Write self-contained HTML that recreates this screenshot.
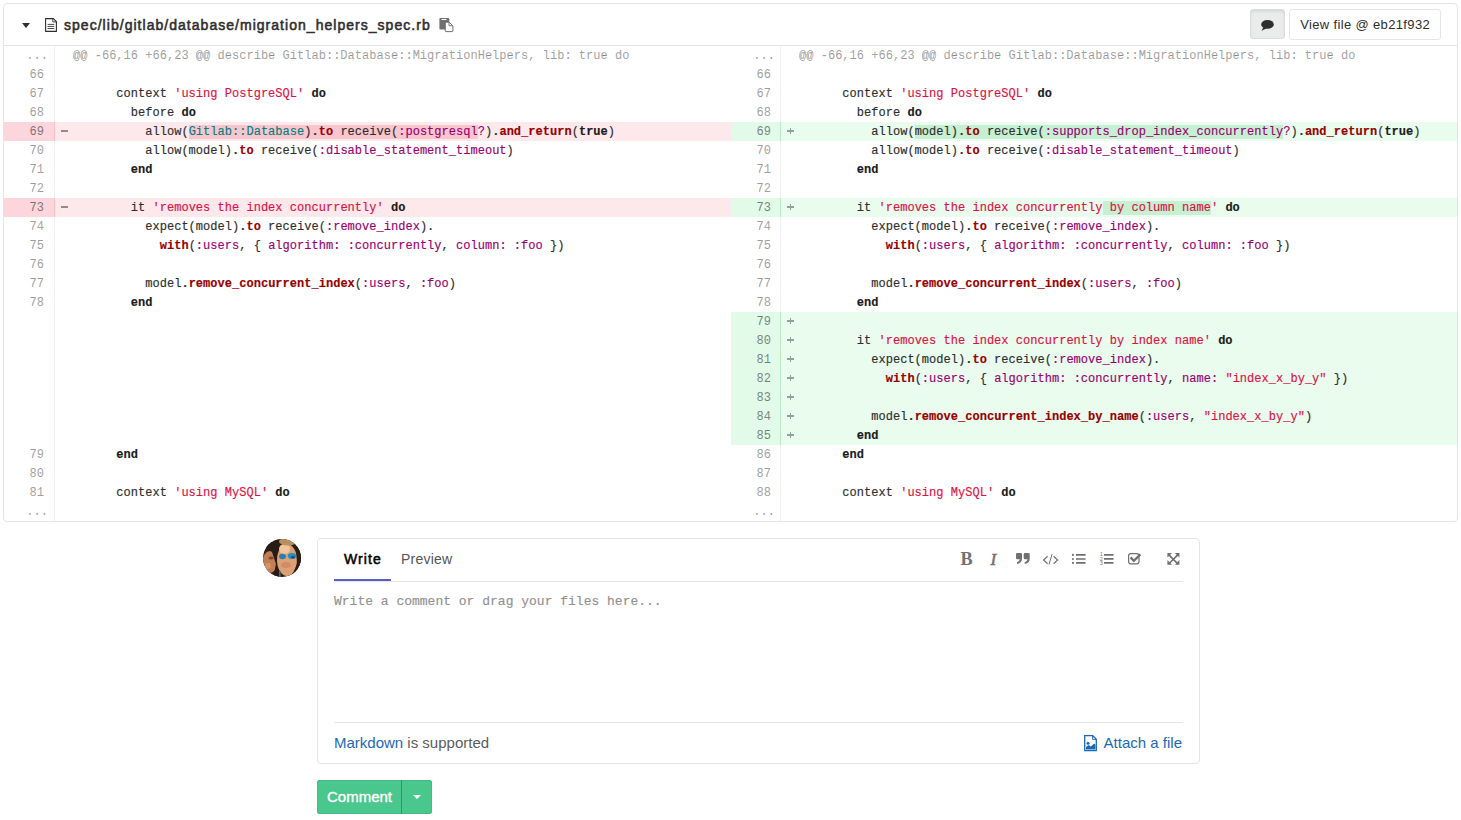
<!DOCTYPE html>
<html><head><meta charset="utf-8">
<style>
*{box-sizing:border-box;margin:0;padding:0}
html,body{width:1461px;height:820px;background:#fff;overflow:hidden;font-family:"Liberation Sans",sans-serif;color:#2e2e2e}
.file{position:absolute;left:3px;top:3px;width:1455px;height:519px;border:1px solid #e5e5e5;border-radius:4px;overflow:hidden}
.hdr{position:absolute;left:0;top:0;width:1453px;height:42px;border-bottom:1px solid #e5e5e5}
.caret{position:absolute;left:18px;top:19px;width:0;height:0;border-left:4.5px solid transparent;border-right:4.5px solid transparent;border-top:5px solid #2e2e2e}
.ficon{position:absolute;left:41px;top:14px}
.title{position:absolute;left:60px;top:13px;font-weight:normal;-webkit-text-stroke:0.55px #2e2e2e;font-size:14px;line-height:16px;color:#2e2e2e;white-space:nowrap;letter-spacing:1.03px}
.copy{position:absolute;left:435px;top:14px}
.btn-c{position:absolute;left:1246px;top:5px;width:35px;height:30px;border:1px solid #dcdcdc;border-radius:3px;background:#eaebeb;box-shadow:inset 0 2px 2px rgba(0,0,0,.08)}
.btn-v{position:absolute;left:1285px;top:5px;width:152px;height:31px;border:1px solid #e5e5e5;border-radius:3px;background:#fff;font-size:13px;line-height:29px;text-align:center;color:#2e2e2e;white-space:nowrap;letter-spacing:0.35px;text-indent:0.35px}
.diff{position:absolute;left:0;top:42px;width:1453px}
.r{position:relative;height:19px;font-family:"Liberation Mono",monospace;font-size:12px;line-height:19px;white-space:pre;letter-spacing:0.025px;-webkit-text-stroke:0.15px}
.r>div{position:absolute;top:0;height:19px;padding-top:1px}
.ln{color:rgba(0,0,0,.36);text-align:right;border-right:1px solid #f0f0f0}
.l1{left:0;width:51px;padding-right:10px}
.c1{left:51px;width:676px;padding-left:18px}
.l2{left:727px;width:50px;padding-right:9px}
.c2{left:777px;width:676px;padding-left:18px}
.match{color:rgba(0,0,0,.36)}
.old.ln{background:#fdd5dc;border-right-color:#fbbfca}
.old.lc{background:#fde8eb}
.new.ln{background:#e1fbe8;border-right-color:#b9ecc7}
.new.lc{background:#e9fcee}
.sign{position:absolute;left:6px;top:0;width:7px;height:19px}
.sm::before{content:"";position:absolute;left:0;top:8px;width:7px;height:1.6px;background:#9a868b}
.sp::before{content:"";position:absolute;left:0;top:8.3px;width:7px;height:1.4px;background:#8da596}
.sp::after{content:"";position:absolute;left:2.8px;top:5.6px;width:1.4px;height:6.8px;background:#8da596}
.old.ln,.new.ln{color:rgba(0,0,0,.45)}
.k{font-weight:bold;color:#1c1c1c}
.s{color:#d14}
.ss{color:#990073}
.nf{color:#900;font-weight:bold}
.no{color:#008080}
.o{font-weight:bold}
.hl1{background:#fac5cd}
.hl2{background:#c7f0d2}
.dots{position:relative;left:4px}

.avatar{position:absolute;left:262px;top:538px;width:40px;height:40px;border-radius:50%;background:#8a5a3c;overflow:hidden}
.form{position:absolute;left:317px;top:538px;width:883px;height:226px;border:1px solid #e5e5e5;border-radius:4px}
.tab-write{position:absolute;left:26px;top:12px;font-size:14px;line-height:16px;font-weight:normal;-webkit-text-stroke:0.5px #000;color:#000;letter-spacing:1.1px}
.tab-prev{position:absolute;left:83px;top:12px;font-size:14px;line-height:16px;color:#555;letter-spacing:0.22px}
.tab-ul{position:absolute;left:16px;top:40px;width:57px;height:2px;background:#5a5ec2}
.tab-line{position:absolute;left:16px;top:42px;width:849px;height:1px;background:#e5e5e5}
.ph{position:absolute;left:16px;top:55px;font-family:"Liberation Mono",monospace;font-size:13px;line-height:16px;color:#919191;-webkit-text-stroke:0.15px}
.foot-line{position:absolute;left:16px;top:183px;width:849px;height:1px;background:#e5e5e5}
.md{position:absolute;left:16px;top:195px;font-size:15px;line-height:17px;color:#5c5c5c}
.lnk{color:#1b69b6}
.attach{position:absolute;right:17px;top:195px;font-size:15px;line-height:17px}
.tb{position:absolute;left:0;top:0}
.tb-b{position:absolute;left:643px;top:12px;font-family:"Liberation Serif",serif;font-weight:bold;font-size:16px;color:#707070}
.tb-i{position:absolute;left:672px;top:12px;font-family:"Liberation Serif",serif;font-style:italic;font-size:16px;color:#707070}
.cbtn{position:absolute;left:317px;top:780px;width:115px;height:34px;background:#4ac78d;border-radius:3px;box-shadow:inset 0 0 0 1px #45bb84}
.ctext{position:absolute;left:10px;top:8px;font-size:15px;line-height:17px;color:#fff;-webkit-text-stroke:0.35px #fff}
.csep{position:absolute;left:84px;top:0;width:1px;height:34px;background:#17a55c}
.ccaret{position:absolute;left:96px;top:15px;width:0;height:0;border-left:4.5px solid transparent;border-right:4.5px solid transparent;border-top:4.5px solid #fff}
</style></head><body>
<div class="file">
  <div class="hdr">
    <div class="caret"></div>
    <svg class="ficon" width="14" height="16" viewBox="0 0 14 16"><path d="M0.6 0.6h7.8l3 3v9.8h-10.8z" fill="none" stroke="#2e2e2e" stroke-width="1.1" stroke-linejoin="round"/><path d="M7.8 0.8v3.1h3.5" fill="none" stroke="#2e2e2e" stroke-width="0.9"/><path d="M3 6.4h5.9M3 8.45h5.9M3 10.5h5.9" stroke="#2e2e2e" stroke-width="0.85" stroke-linecap="round"/></svg>
    <div class="title">spec/lib/gitlab/database/migration_helpers_spec.rb</div>
    <svg class="copy" width="16" height="15" viewBox="0 0 16 15"><rect x="0.4" y="0" width="9.9" height="11.6" rx="1" fill="#707070"/><rect x="2.3" y="1" width="5.3" height="1.1" rx="0.5" fill="#fff"/><path d="M6.3 4.2h3.9l3.7 3.7v5.2q0 .5-.5.5h-6.6q-.5 0-.5-.5z" fill="#fff" stroke="#707070" stroke-width="1"/><path d="M10 4.3v3.4h3.8" fill="none" stroke="#707070" stroke-width="0.9"/></svg>
    <div class="btn-c"><svg width="16" height="14" viewBox="0 0 16 14" style="position:absolute;left:8px;top:9px"><ellipse cx="8.5" cy="5.4" rx="6.3" ry="4.4" fill="#2e2e2e"/><path d="M4.3 8.3 L2.6 11.8 L7.8 9.3z" fill="#2e2e2e"/></svg></div>
    <div class="btn-v">View file @ eb21f932</div>
  </div>
  <div class="diff" id="diff">
<div class="r"><div class="ln l1 match"><span class="dots">...</span></div><div class="lc c1 match">@@ -66,16 +66,23 @@ describe Gitlab::Database::MigrationHelpers, lib: true do</div><div class="ln l2 match"><span class="dots">...</span></div><div class="lc c2 match">@@ -66,16 +66,23 @@ describe Gitlab::Database::MigrationHelpers, lib: true do</div></div>
<div class="r"><div class="ln l1 ">66</div><div class="lc c1 "></div><div class="ln l2 ">66</div><div class="lc c2 "></div></div>
<div class="r"><div class="ln l1 ">67</div><div class="lc c1 ">      context <span class="s">&#x27;using PostgreSQL&#x27;</span> <span class="k">do</span></div><div class="ln l2 ">67</div><div class="lc c2 ">      context <span class="s">&#x27;using PostgreSQL&#x27;</span> <span class="k">do</span></div></div>
<div class="r"><div class="ln l1 ">68</div><div class="lc c1 ">        before <span class="k">do</span></div><div class="ln l2 ">68</div><div class="lc c2 ">        before <span class="k">do</span></div></div>
<div class="r"><div class="ln l1 old">69</div><div class="lc c1 old"><span class="sign sm"></span>          allow(<span class="hl1"><span class="no">Gitlab::Database</span>)<span class="o">.</span><span class="nf">to</span> receive(<span class="ss">:postgresql</span></span><span class="ss">?</span>)<span class="o">.</span><span class="nf">and_return</span>(<span class="k">true</span>)</div><div class="ln l2 new">69</div><div class="lc c2 new"><span class="sign sp"></span>          allow(<span class="hl2">model)<span class="o">.</span><span class="nf">to</span> receive(<span class="ss">:supports_drop_index_concurrently</span></span><span class="ss">?</span>)<span class="o">.</span><span class="nf">and_return</span>(<span class="k">true</span>)</div></div>
<div class="r"><div class="ln l1 ">70</div><div class="lc c1 ">          allow(model)<span class="o">.</span><span class="nf">to</span> receive(<span class="ss">:disable_statement_timeout</span>)</div><div class="ln l2 ">70</div><div class="lc c2 ">          allow(model)<span class="o">.</span><span class="nf">to</span> receive(<span class="ss">:disable_statement_timeout</span>)</div></div>
<div class="r"><div class="ln l1 ">71</div><div class="lc c1 ">        <span class="k">end</span></div><div class="ln l2 ">71</div><div class="lc c2 ">        <span class="k">end</span></div></div>
<div class="r"><div class="ln l1 ">72</div><div class="lc c1 "></div><div class="ln l2 ">72</div><div class="lc c2 "></div></div>
<div class="r"><div class="ln l1 old">73</div><div class="lc c1 old"><span class="sign sm"></span>        it <span class="s">&#x27;removes the index concurrently&#x27;</span> <span class="k">do</span></div><div class="ln l2 new">73</div><div class="lc c2 new"><span class="sign sp"></span>        it <span class="s">'removes the index concurrently<span class="hl2"> by column name</span>'</span> <span class="k">do</span></div></div>
<div class="r"><div class="ln l1 ">74</div><div class="lc c1 ">          expect(model)<span class="o">.</span><span class="nf">to</span> receive(<span class="ss">:remove_index</span>).</div><div class="ln l2 ">74</div><div class="lc c2 ">          expect(model)<span class="o">.</span><span class="nf">to</span> receive(<span class="ss">:remove_index</span>).</div></div>
<div class="r"><div class="ln l1 ">75</div><div class="lc c1 ">            <span class="nf">with</span>(<span class="ss">:users</span>, { <span class="ss">algorithm:</span> <span class="ss">:concurrently</span>, <span class="ss">column:</span> <span class="ss">:foo</span> })</div><div class="ln l2 ">75</div><div class="lc c2 ">            <span class="nf">with</span>(<span class="ss">:users</span>, { <span class="ss">algorithm:</span> <span class="ss">:concurrently</span>, <span class="ss">column:</span> <span class="ss">:foo</span> })</div></div>
<div class="r"><div class="ln l1 ">76</div><div class="lc c1 "></div><div class="ln l2 ">76</div><div class="lc c2 "></div></div>
<div class="r"><div class="ln l1 ">77</div><div class="lc c1 ">          model<span class="o">.</span><span class="nf">remove_concurrent_index</span>(<span class="ss">:users</span>, <span class="ss">:foo</span>)</div><div class="ln l2 ">77</div><div class="lc c2 ">          model<span class="o">.</span><span class="nf">remove_concurrent_index</span>(<span class="ss">:users</span>, <span class="ss">:foo</span>)</div></div>
<div class="r"><div class="ln l1 ">78</div><div class="lc c1 ">        <span class="k">end</span></div><div class="ln l2 ">78</div><div class="lc c2 ">        <span class="k">end</span></div></div>
<div class="r"><div class="ln l1 empty"></div><div class="lc c1 empty"></div><div class="ln l2 new">79</div><div class="lc c2 new"><span class="sign sp"></span></div></div>
<div class="r"><div class="ln l1 empty"></div><div class="lc c1 empty"></div><div class="ln l2 new">80</div><div class="lc c2 new"><span class="sign sp"></span>        it <span class="s">&#x27;removes the index concurrently by index name&#x27;</span> <span class="k">do</span></div></div>
<div class="r"><div class="ln l1 empty"></div><div class="lc c1 empty"></div><div class="ln l2 new">81</div><div class="lc c2 new"><span class="sign sp"></span>          expect(model)<span class="o">.</span><span class="nf">to</span> receive(<span class="ss">:remove_index</span>).</div></div>
<div class="r"><div class="ln l1 empty"></div><div class="lc c1 empty"></div><div class="ln l2 new">82</div><div class="lc c2 new"><span class="sign sp"></span>            <span class="nf">with</span>(<span class="ss">:users</span>, { <span class="ss">algorithm:</span> <span class="ss">:concurrently</span>, <span class="ss">name:</span> <span class="s">&quot;index_x_by_y&quot;</span> })</div></div>
<div class="r"><div class="ln l1 empty"></div><div class="lc c1 empty"></div><div class="ln l2 new">83</div><div class="lc c2 new"><span class="sign sp"></span></div></div>
<div class="r"><div class="ln l1 empty"></div><div class="lc c1 empty"></div><div class="ln l2 new">84</div><div class="lc c2 new"><span class="sign sp"></span>          model<span class="o">.</span><span class="nf">remove_concurrent_index_by_name</span>(<span class="ss">:users</span>, <span class="s">&quot;index_x_by_y&quot;</span>)</div></div>
<div class="r"><div class="ln l1 empty"></div><div class="lc c1 empty"></div><div class="ln l2 new">85</div><div class="lc c2 new"><span class="sign sp"></span>        <span class="k">end</span></div></div>
<div class="r"><div class="ln l1 ">79</div><div class="lc c1 ">      <span class="k">end</span></div><div class="ln l2 ">86</div><div class="lc c2 ">      <span class="k">end</span></div></div>
<div class="r"><div class="ln l1 ">80</div><div class="lc c1 "></div><div class="ln l2 ">87</div><div class="lc c2 "></div></div>
<div class="r"><div class="ln l1 ">81</div><div class="lc c1 ">      context <span class="s">&#x27;using MySQL&#x27;</span> <span class="k">do</span></div><div class="ln l2 ">88</div><div class="lc c2 ">      context <span class="s">&#x27;using MySQL&#x27;</span> <span class="k">do</span></div></div>
<div class="r"><div class="ln l1 match"><span class="dots">...</span></div><div class="lc c1 match"></div><div class="ln l2 match"><span class="dots">...</span></div><div class="lc c2 match"></div></div>
  </div>
</div>

<svg class="av" width="40" height="40" viewBox="0 0 40 40" style="position:absolute;left:262px;top:538px">
<defs><clipPath id="avc"><circle cx="20" cy="20" r="19"/></clipPath><filter id="avb" x="-10%" y="-10%" width="120%" height="120%"><feGaussianBlur stdDeviation="0.7"/></filter></defs>
<g clip-path="url(#avc)">
<rect width="40" height="40" fill="#2b1e16"/>
<g filter="url(#avb)">
<ellipse cx="8" cy="24" rx="7.5" ry="11" fill="#c27f55"/>
<ellipse cx="9" cy="20" rx="2.5" ry="1.6" fill="#7a4530"/>
<ellipse cx="6" cy="28" rx="3" ry="3" fill="#d49468"/>
<path d="M2 8 L15 1 L21 16 L17 40 L11 40 L14 26 L10 14 Z" fill="#251a13"/>
<ellipse cx="25" cy="22" rx="10" ry="16" fill="#dca072"/>
<ellipse cx="22.5" cy="11" rx="5.5" ry="5" fill="#f1c59a"/>
<ellipse cx="26" cy="3.5" rx="9" ry="4" fill="#b98f62"/>
<ellipse cx="24" cy="27" rx="5" ry="3" fill="#d08c6a"/>
<ellipse cx="20.5" cy="18.5" rx="3.4" ry="2.8" fill="#2a7db8"/>
<ellipse cx="30" cy="18" rx="4.2" ry="3" fill="#1f8fc8"/>
<ellipse cx="31" cy="19.2" rx="2" ry="1.2" fill="#1c4a86"/>
<path d="M34 8 L40 10 L40 40 L29 40 L35 26 Z" fill="#2a1d15"/>
<rect x="17" y="33" width="1.6" height="7" fill="#55677a"/>
</g>
</g>
</svg>

<div class="form">
  <div class="tab-write">Write</div>
  <div class="tab-prev">Preview</div>
  <div class="tab-ul"></div>
  <div class="tab-line"></div>
    <div class="ph">Write a comment or drag your files here...</div>
  <div class="foot-line"></div>
  <div class="md"><span class="lnk">Markdown</span> is supported</div>
  <div class="attach"><svg width="14" height="17" viewBox="0 0 14 17" style="position:absolute;left:-20px;top:0.5px"><path d="M0.7 0.7h8l3.6 3.6v11.4h-11.6z" fill="none" stroke="#1b69b6" stroke-width="1.3"/><path d="M8.6 0.8v3.6h3.6" fill="none" stroke="#1b69b6" stroke-width="0.9"/><circle cx="4" cy="8.2" r="1.5" fill="#1b69b6"/><path d="M2 14.6v-2.6l2.8-2 2 1.5 3.4-3 1.2 1.2v4.9z" fill="#1b69b6"/></svg><span class="lnk">Attach a file</span></div>
</div>
<svg class="toolbar" width="230" height="25" viewBox="0 0 230 25" style="position:absolute;left:955px;top:545px">
<g fill="#707070">
<text x="5.6" y="20.1" font-family="Liberation Serif" font-weight="bold" font-size="18.2">B</text>
<text x="35.6" y="20.1" font-family="Liberation Serif" font-style="italic" font-size="17" stroke="#707070" stroke-width="0.5">I</text>
<path d="M61 9.3q0-1.3 1.3-1.3h3.4q1.3 0 1.3 1.3v4.2q0 4.6-5 5.5v-1.8q2.6-.8 2.9-2.9h-2.6q-1.3 0-1.3-1.3z"/>
<path d="M68.7 9.3q0-1.3 1.3-1.3h3.4q1.3 0 1.3 1.3v4.2q0 4.6-5 5.5v-1.8q2.6-.8 2.9-2.9h-2.6q-1.3 0-1.3-1.3z"/>
</g>
<g fill="none" stroke="#707070">
<path d="M92.6 11.3L88.6 15l4 3.7M98.6 11.3l4 3.7-4 3.7" stroke-width="1.2"/>
<path d="M97.1 9.2L94 19.4" stroke-width="1"/>
<path d="M121 9.9h9.6M121 14h9.6M121 17.9h9.6" stroke-width="1.7"/>
<path d="M149 9.9h9.5M149 13.9h9.5M149 17.9h9.5" stroke-width="1.7"/>
<rect x="173.6" y="8.6" width="10.4" height="10.2" rx="2.2" stroke-width="1.2"/>
<path d="M175.6 12.4l3.2 3.4 6.6-6.4" stroke-width="2.3"/>
<path d="M213.6 9.6l9.4 9.4M223 9.6l-9.4 9.4" stroke-width="1.6"/>
</g>
<g fill="#707070">
<circle cx="117.9" cy="9.9" r="1.05"/><circle cx="117.9" cy="14" r="1.05"/><circle cx="117.9" cy="17.9" r="1.05"/>
<text x="145" y="11" font-family="Liberation Sans" font-size="5">1</text>
<text x="145" y="15.5" font-family="Liberation Sans" font-size="5">2</text>
<text x="145" y="20" font-family="Liberation Sans" font-size="5">3</text>
<path d="M212.4 8h4.6l-4.6 4.6zM224.4 8h-4.6l4.6 4.6zM212.4 19.7h4.6l-4.6-4.6zM224.4 19.7h-4.6l4.6-4.6z"/>
</g>
</svg>
<div class="cbtn"><span class="ctext">Comment</span><div class="csep"></div><div class="ccaret"></div></div>
</body></html>
